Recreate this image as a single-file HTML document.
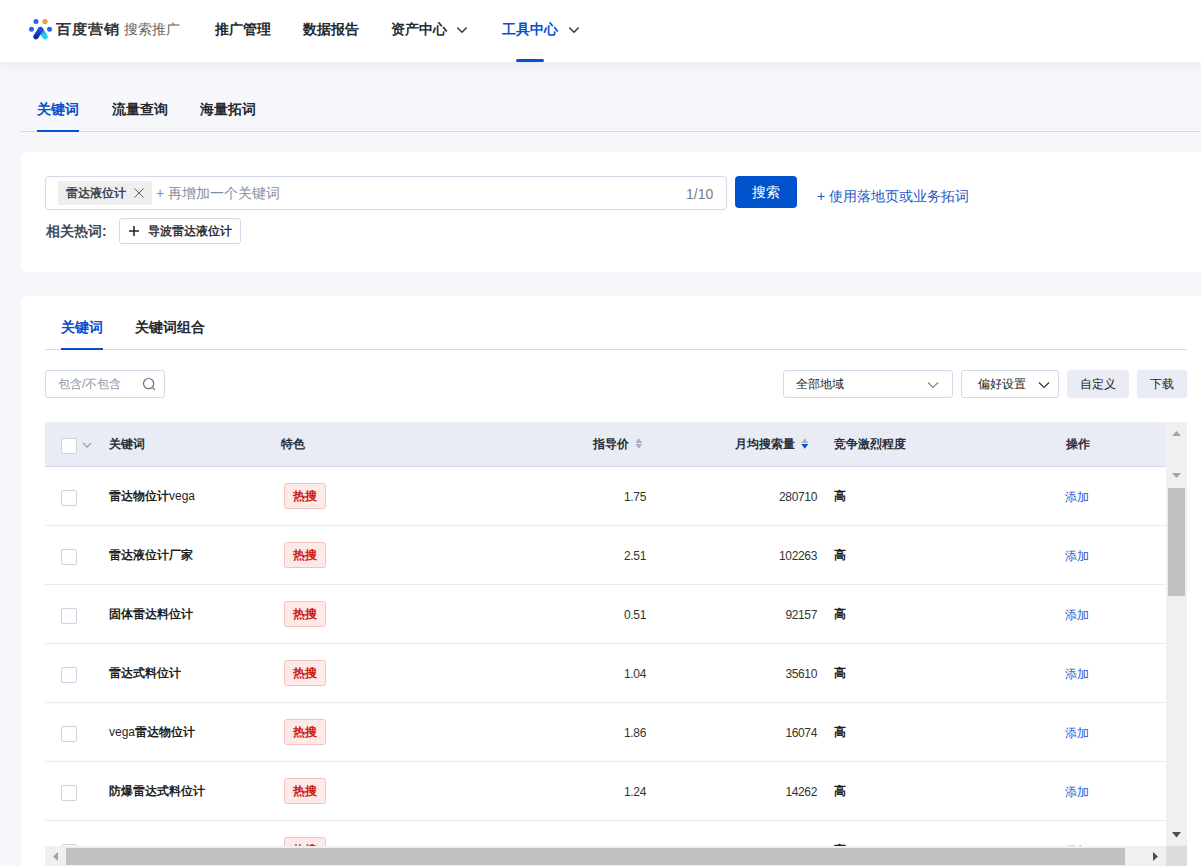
<!DOCTYPE html>
<html><head><meta charset="utf-8">
<style>
*{box-sizing:border-box;margin:0;padding:0}
html,body{width:1201px;height:866px;overflow:hidden}
body{background:#f5f7fb;font-family:"Liberation Sans",sans-serif;color:#333;position:relative}
.a{position:absolute;white-space:nowrap}
.hdr{position:absolute;left:0;top:0;width:1201px;height:62px;background:#fff;box-shadow:0 2px 10px rgba(10,20,50,0.08)}
.nav{font-size:14px;font-weight:bold;color:#262a31;line-height:20px}
.card{position:absolute;background:#fff;border-radius:6px}
.t14b{font-size:14px;font-weight:bold;line-height:20px}
.t12{font-size:12px;line-height:16px}
.t12b{font-size:12px;font-weight:bold;line-height:16px}
.bd{border:1px solid #d3d9e8}

.tbl{position:absolute;left:45px;top:422px;width:1121px;height:424px;overflow:hidden;background:#fff}
.th{position:absolute;left:0;top:0;width:1121px;height:45px;background:#e9ecf4;border-bottom:1px solid #d3d9e6;color:#2a2e36}
.row{position:absolute;left:0;width:1121px;height:59px;border-bottom:1px solid #e8ebf2}
.cb{position:absolute;width:16px;height:16px;border:1px solid #ccd2de;border-radius:2px;background:#fff}
.kw{font-size:12px;line-height:16px;color:#1f1f1f}
.kw b{font-weight:bold}
.tag{width:42px;height:26px;border:1px solid #f3c4bf;background:#fce9e8;border-radius:2.5px;color:#cf1a0c;font-size:12px;font-weight:bold;line-height:25px;text-align:center}
.num{font-size:12px;line-height:16px;color:#333;text-align:right;letter-spacing:-0.35px}
</style></head><body>

<div class="hdr">
  <svg class="a" style="left:0;top:0" width="60" height="50" viewBox="0 0 60 50">
    <defs>
      <linearGradient id="gl" x1="0" y1="0" x2="0" y2="1"><stop offset="0" stop-color="#2252e6"/><stop offset="1" stop-color="#0d2aa8"/></linearGradient>
      <linearGradient id="gr" x1="0" y1="0" x2="0.3" y2="1"><stop offset="0" stop-color="#2a6ee8"/><stop offset="1" stop-color="#20d0f0"/></linearGradient>
    </defs>
    <circle cx="36" cy="21.5" r="2.5" fill="#2d5cf6"/>
    <circle cx="45" cy="21.5" r="2.6" fill="#e3a23c"/>
    <circle cx="31.5" cy="29.2" r="2.5" fill="#2d5cf6"/>
    <circle cx="49.5" cy="29.2" r="2.5" fill="#2d5cf6"/>
    <path d="M40.6 29.6 L45 36.6" stroke="url(#gr)" stroke-width="5.4" stroke-linecap="round" fill="none"/>
    <path d="M40.4 29.6 L36 36.6" stroke="url(#gl)" stroke-width="5.4" stroke-linecap="round" fill="none"/>
  </svg>
  <div class="a" style="left:56px;top:18.5px;font-size:15.5px;font-weight:bold;color:#333;line-height:20px;transform:scale(1,0.92);transform-origin:0 50%">百度营销</div>
  <div class="a" style="left:124px;top:19px;font-size:14.4px;color:#666;line-height:20px">搜索推广</div>
  <div class="a nav" style="left:215px;top:19px">推广管理</div>
  <div class="a nav" style="left:303px;top:19px">数据报告</div>
  <div class="a nav" style="left:391px;top:19px">资产中心</div>
  <div class="a nav" style="left:502px;top:19px;color:#0a4fd0">工具中心</div>
  <div class="a" style="left:516px;top:59px;width:28px;height:3px;background:#0a4fd0;border-radius:2px"></div>
  <svg class="a" style="left:455px;top:25px" width="14" height="11" viewBox="0 0 14 11"><path d="M2.3 2.5 L7 7.3 L11.7 2.5" stroke="#333" stroke-width="1.4" fill="none"/></svg>
  <svg class="a" style="left:567px;top:25px" width="14" height="11" viewBox="0 0 14 11"><path d="M2.3 2.5 L7 7.3 L11.7 2.5" stroke="#333" stroke-width="1.4" fill="none"/></svg>
</div>

<div class="a t14b" style="left:37px;top:99px;color:#0a4fd0">关键词</div>
<div class="a t14b" style="left:112px;top:99px;color:#262a31">流量查询</div>
<div class="a t14b" style="left:200px;top:99px;color:#262a31">海量拓词</div>
<div class="a" style="left:21px;top:131px;width:1180px;height:1px;background:#d5d9e6"></div>
<div class="a" style="left:37px;top:130px;width:42px;height:2px;background:#0a4fd0"></div>

<div class="card" style="left:21px;top:152px;width:1200px;height:120px"></div>
<div class="a" style="left:45px;top:176px;width:682px;height:34px;border:1px solid #d3d9e8;border-radius:4px;background:#fff"></div>
<div class="a" style="left:58px;top:181px;width:94px;height:24px;background:#eeeeef;border-radius:2px"></div>
<div class="a t12b" style="left:66px;top:185px;color:#40444f">雷达液位计</div>
<svg class="a" style="left:133px;top:187px" width="12" height="12" viewBox="0 0 12 12"><path d="M1.5 1.5 L10.5 10.5 M10.5 1.5 L1.5 10.5" stroke="#5f636b" stroke-width="1" fill="none"/></svg>
<div class="a" style="left:156px;top:183px;font-size:14px;line-height:20px;color:#868e9e">+ 再增加一个关键词</div>
<div class="a" style="left:686px;top:184px;font-size:14px;line-height:20px;color:#787d86">1/10</div>
<div class="a" style="left:735px;top:176px;width:62px;height:32px;background:#0052cc;border-radius:4px"></div>
<div class="a" style="left:752px;top:182px;font-size:14px;line-height:20px;color:#fff">搜索</div>
<div class="a" style="left:817px;top:186px;font-size:14px;line-height:20px;color:#1f55c9">+ 使用落地页或业务拓词</div>
<div class="a t14b" style="left:46px;top:221px;color:#444b58">相关热词:</div>
<div class="a" style="left:119px;top:218px;width:122px;height:26px;border:1px solid #d3d9e8;border-radius:3px;background:#fff"></div>
<svg class="a" style="left:128px;top:225px" width="12" height="12" viewBox="0 0 12 12"><path d="M6 1 V11 M1 6 H11" stroke="#222" stroke-width="1.5" fill="none"/></svg>
<div class="a t12b" style="left:148px;top:223px;color:#333">导波雷达液位计</div>
<div class="card" style="left:21px;top:296px;width:1200px;height:600px"></div>
<div class="a t14b" style="left:61px;top:317px;color:#0a4fd0">关键词</div>
<div class="a t14b" style="left:135px;top:317px;color:#262a31">关键词组合</div>
<div class="a" style="left:45px;top:349px;width:1142px;height:1px;background:#d5d9e6"></div>
<div class="a" style="left:61px;top:348px;width:42px;height:2px;background:#0a4fd0"></div>

<div class="a" style="left:45px;top:370px;width:120px;height:28px;border:1px solid #d3d9e8;border-radius:3px;background:#fff"></div>
<div class="a t12" style="left:58px;top:376px;color:#8f97a8">包含/不包含</div>
<svg class="a" style="left:141px;top:376px" width="16" height="16" viewBox="0 0 16 16"><circle cx="7.6" cy="7.6" r="5.1" stroke="#6b7280" stroke-width="1.2" fill="none"/><path d="M11.3 11.3 L14 14" stroke="#6b7280" stroke-width="1.2"/></svg>

<div class="a" style="left:783px;top:370px;width:170px;height:28px;border:1px solid #d3d9e8;border-radius:3px;background:#fff"></div>
<div class="a t12" style="left:796px;top:376px;color:#222">全部地域</div>
<svg class="a" style="left:926px;top:380px" width="14" height="10" viewBox="0 0 14 10"><path d="M2 2.5 L7 7.5 L12 2.5" stroke="#888" stroke-width="1.2" fill="none"/></svg>
<div class="a" style="left:961px;top:370px;width:98px;height:28px;border:1px solid #d3d9e8;border-radius:3px;background:#fff"></div>
<div class="a t12" style="left:978px;top:376px;color:#222">偏好设置</div>
<svg class="a" style="left:1037px;top:380px" width="14" height="10" viewBox="0 0 14 10"><path d="M2 2.5 L7 7.5 L12 2.5" stroke="#333" stroke-width="1.2" fill="none"/></svg>
<div class="a" style="left:1067px;top:370px;width:62px;height:28px;background:#e9ecf4;border-radius:3px"></div>
<div class="a t12" style="left:1080px;top:376px;color:#222">自定义</div>
<div class="a" style="left:1137px;top:370px;width:50px;height:28px;background:#e9ecf4;border-radius:3px"></div>
<div class="a t12" style="left:1150px;top:376px;color:#222">下载</div>

<div class="tbl">
<div class="th">
  <div class="cb" style="left:16px;top:16px"></div>
<svg class="a" style="left:36px;top:19px" width="12" height="8" viewBox="0 0 14 10"><path d="M2 2.5 L7 7.5 L12 2.5" stroke="#7f8796" stroke-width="1.3" fill="none"/></svg>
  <div class="a t12b" style="left:64px;top:14px">关键词</div>
  <div class="a t12b" style="left:236px;top:14px">特色</div>
  <div class="a t12b" style="left:548px;top:14px">指导价</div>
  <svg class="a" style="left:590px;top:16px" width="8" height="12" viewBox="0 0 8 12"><path d="M0.3 4.9 L3.8 0.3 L7.3 4.9Z M0.3 6.1 L3.8 10.7 L7.3 6.1Z" fill="#a9b0c0"/></svg>
  <div class="a t12b" style="left:690px;top:14px">月均搜索量</div>
  <svg class="a" style="left:756px;top:16px" width="8" height="12" viewBox="0 0 8 12"><path d="M0.3 4.9 L3.8 0.3 L7.3 4.9Z" fill="#a9b0c0"/><path d="M0.3 6.1 L3.8 10.7 L7.3 6.1Z" fill="#0a4fd0"/></svg>
  <div class="a t12b" style="left:789px;top:14px">竞争激烈程度</div>
  <div class="a t12b" style="left:1021px;top:14px">操作</div>
</div>
<div class="row" style="top:45px">
  <div class="cb" style="left:16px;top:23px"></div>
  <div class="a kw" style="left:64px;top:21px"><b>雷达物位计</b>vega</div>
  <div class="a tag" style="left:239px;top:16px">热搜</div>
  <div class="a num" style="left:500px;top:22px;width:101px">1.75</div>
  <div class="a num" style="left:672px;top:22px;width:100px">280710</div>
  <div class="a t12b" style="left:789px;top:21px;color:#1f1f1f">高</div>
  <div class="a t12" style="left:1020px;top:22px;color:#1f55d0">添加</div>
</div>
<div class="row" style="top:104px">
  <div class="cb" style="left:16px;top:23px"></div>
  <div class="a kw" style="left:64px;top:21px"><b>雷达液位计厂家</b></div>
  <div class="a tag" style="left:239px;top:16px">热搜</div>
  <div class="a num" style="left:500px;top:22px;width:101px">2.51</div>
  <div class="a num" style="left:672px;top:22px;width:100px">102263</div>
  <div class="a t12b" style="left:789px;top:21px;color:#1f1f1f">高</div>
  <div class="a t12" style="left:1020px;top:22px;color:#1f55d0">添加</div>
</div>
<div class="row" style="top:163px">
  <div class="cb" style="left:16px;top:23px"></div>
  <div class="a kw" style="left:64px;top:21px"><b>固体雷达料位计</b></div>
  <div class="a tag" style="left:239px;top:16px">热搜</div>
  <div class="a num" style="left:500px;top:22px;width:101px">0.51</div>
  <div class="a num" style="left:672px;top:22px;width:100px">92157</div>
  <div class="a t12b" style="left:789px;top:21px;color:#1f1f1f">高</div>
  <div class="a t12" style="left:1020px;top:22px;color:#1f55d0">添加</div>
</div>
<div class="row" style="top:222px">
  <div class="cb" style="left:16px;top:23px"></div>
  <div class="a kw" style="left:64px;top:21px"><b>雷达式料位计</b></div>
  <div class="a tag" style="left:239px;top:16px">热搜</div>
  <div class="a num" style="left:500px;top:22px;width:101px">1.04</div>
  <div class="a num" style="left:672px;top:22px;width:100px">35610</div>
  <div class="a t12b" style="left:789px;top:21px;color:#1f1f1f">高</div>
  <div class="a t12" style="left:1020px;top:22px;color:#1f55d0">添加</div>
</div>
<div class="row" style="top:281px">
  <div class="cb" style="left:16px;top:23px"></div>
  <div class="a kw" style="left:64px;top:21px">vega<b>雷达物位计</b></div>
  <div class="a tag" style="left:239px;top:16px">热搜</div>
  <div class="a num" style="left:500px;top:22px;width:101px">1.86</div>
  <div class="a num" style="left:672px;top:22px;width:100px">16074</div>
  <div class="a t12b" style="left:789px;top:21px;color:#1f1f1f">高</div>
  <div class="a t12" style="left:1020px;top:22px;color:#1f55d0">添加</div>
</div>
<div class="row" style="top:340px">
  <div class="cb" style="left:16px;top:23px"></div>
  <div class="a kw" style="left:64px;top:21px"><b>防爆雷达式料位计</b></div>
  <div class="a tag" style="left:239px;top:16px">热搜</div>
  <div class="a num" style="left:500px;top:22px;width:101px">1.24</div>
  <div class="a num" style="left:672px;top:22px;width:100px">14262</div>
  <div class="a t12b" style="left:789px;top:21px;color:#1f1f1f">高</div>
  <div class="a t12" style="left:1020px;top:22px;color:#1f55d0">添加</div>
</div>
<div class="row" style="top:399px">
  <div class="cb" style="left:16px;top:23px"></div>
  <div class="a kw" style="left:64px;top:21px"></div>
  <div class="a tag" style="left:239px;top:16px">热搜</div>
  <div class="a num" style="left:500px;top:22px;width:101px">1.20</div>
  <div class="a num" style="left:672px;top:22px;width:100px">12000</div>
  <div class="a t12b" style="left:789px;top:21px;color:#1f1f1f">高</div>
  <div class="a t12" style="left:1020px;top:22px;color:#1f55d0">添加</div>
</div>
</div>
<div class="a" style="left:1166px;top:422px;width:21px;height:424px;background:#f0f0f0"></div>
<svg class="a" style="left:1166px;top:422px" width="21" height="60" viewBox="0 0 21 60"><path d="M6 14 L10.5 9 L15 14Z" fill="#a3a3a3"/><path d="M6 51 L10.5 56 L15 51Z" fill="#a3a3a3"/></svg>
<div class="a" style="left:1168px;top:488px;width:17px;height:108px;background:#c1c1c1"></div>
<svg class="a" style="left:1166px;top:825px" width="21" height="21" viewBox="0 0 21 21"><path d="M6 7 L10.5 12.5 L15 7Z" fill="#505050"/></svg>
<div class="a" style="left:45px;top:846px;width:1121px;height:20px;background:#f0f0f0"></div>
<svg class="a" style="left:45px;top:846px" width="21" height="20" viewBox="0 0 21 20"><path d="M13 6 L8 10.5 L13 15Z" fill="#a3a3a3"/></svg>
<div class="a" style="left:66px;top:848px;width:1059px;height:17px;background:#c1c1c1"></div>
<svg class="a" style="left:1145px;top:846px" width="21" height="20" viewBox="0 0 21 20"><path d="M8 6 L13 10.5 L8 15Z" fill="#505050"/></svg>
<div class="a" style="left:1166px;top:846px;width:21px;height:20px;background:#dcdcdc"></div>


</body></html>
